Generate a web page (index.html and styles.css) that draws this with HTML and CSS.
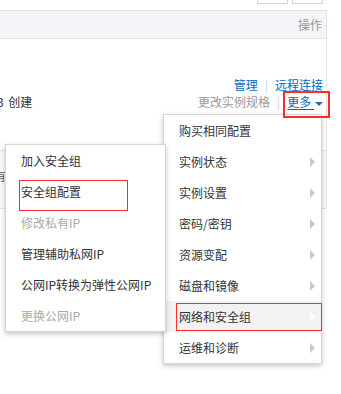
FILE: index.html
```html
<!DOCTYPE html>
<html lang="zh-CN">
<head>
    <meta charset="UTF-8">
    <title>实例列表 - 更多操作</title>
    <link rel="stylesheet" href="styles.css">
</head>
<body>
<div class="page">
    <!-- 顶部按钮 -->
    <div class="toolbar">
        <span class="tbtn"></span>
        <span class="tbtn"></span>
    </div>

    <!-- 实例表格 -->
    <div class="table">
        <div class="thead">操作</div>
        <div class="row row-main">
            <div class="created">3 创建</div>
            <div class="ops">
                <div class="ops-line">
                    <a class="link">管理</a><span class="sep">|</span><a class="link">远程连接</a>
                </div>
                <div class="ops-line">
                    <span class="muted">更改实例规格</span><span class="sep">|</span><a class="link more">更多 <i class="caret"></i></a>
                </div>
            </div>
        </div>
        <div class="row row-next">
            <span class="cut">有</span>
        </div>
    </div>

    <!-- 更多 下拉菜单 -->
    <ul class="menu menu-main">
        <li>购买相同配置</li>
        <li>实例状态<i class="arrow"></i></li>
        <li>实例设置<i class="arrow"></i></li>
        <li>密码/密钥<i class="arrow"></i></li>
        <li>资源变配<i class="arrow"></i></li>
        <li>磁盘和镜像<i class="arrow"></i></li>
        <li class="hover">网络和安全组<i class="arrow"></i></li>
        <li>运维和诊断<i class="arrow"></i></li>
    </ul>

    <!-- 网络和安全组 子菜单 -->
    <ul class="menu menu-sub">
        <li>加入安全组</li>
        <li>安全组配置</li>
        <li class="disabled">修改私有IP</li>
        <li>管理辅助私网IP</li>
        <li>公网IP转换为弹性公网IP</li>
        <li class="disabled">更换公网IP</li>
    </ul>

    <!-- 红框标注 -->
    <div class="mark mark-more"></div>
    <div class="mark mark-net"></div>
    <div class="mark mark-sg"></div>
</div>
</body>
</html>
```

FILE: styles.css
```css
* {
    box-sizing: border-box;
    margin: 0;
    padding: 0;
}
body {
    font-family: "Noto Sans CJK SC", "Noto Sans", sans-serif;
    font-size: 12px;
    color: #333;
    background-color: #ffffff;
    overflow: hidden;
}
.page {
    position: relative;
    width: 341px;
    height: 394px;
    overflow: hidden;
}

/* Toolbar */
.toolbar {
    display: flex;
    justify-content: flex-end;
    gap: 4px;
    height: 10px;
    padding-right: 18px;
}
.tbtn {
    width: 31px;
    height: 4px;
    border: 1px solid #d5d5d5;
    border-top: none;
    background-color: #ffffff;
}

/* Table */
.table {
    width: 327px;
    border-right: 1px solid #e1e6eb;
}
.thead {
    height: 29px;
    line-height: 27px;
    padding-right: 4px;
    text-align: right;
    color: #999;
    background-color: #f4f5f9;
    border-top: 1px solid #dfe4ea;
    border-bottom: 1px solid #e1e6eb;
}
.row {
    display: flex;
    border-bottom: 1px solid #e1e6eb;
}
.row-main {
    height: 112px;
    justify-content: space-between;
    align-items: flex-end;
    padding: 0 3px 40px 0;
}
.created {
    line-height: 17px;
    margin-left: -3px;
    word-spacing: 2px;
}
.ops {
    text-align: right;
}
.ops-line {
    line-height: 17px;
    white-space: nowrap;
}
.link {
    color: #0068c8;
    text-decoration: none;
    cursor: pointer;
}
.muted {
    color: #999;
}
.sep {
    color: #d0d0d0;
    margin: 0 7px 0 7px;
}
.more {
    text-decoration: underline;
    text-underline-offset: 2px;
}
.caret {
    display: inline-block;
    vertical-align: middle;
    width: 0;
    height: 0;
    margin-left: 1px;
    border-top: 4px solid #2d66ad;
    border-left: 4px solid transparent;
    border-right: 4px solid transparent;
}
.row-next {
    height: 58px;
    padding-top: 16px;
    background-color: #fafafa;
}
.row-next .cut {
    line-height: 18px;
    margin-left: -6px;
    color: #555;
}

/* Dropdown menus */
.menu {
    position: absolute;
    list-style: none;
    background-color: #ffffff;
    border: 1px solid #d6d6d6;
    box-shadow: 0 2px 5px rgba(0, 0, 0, 0.22);
}
.menu li {
    display: flex;
    align-items: center;
    height: 31px;
    padding: 0 6px 0 15px;
    white-space: nowrap;
    color: #333;
}
.menu-main {
    left: 163px;
    top: 114px;
    width: 159px;
    z-index: 1;
}
.menu-main li.hover {
    background-color: #f2f2f2;
}
.arrow {
    margin-left: auto;
    width: 0;
    height: 0;
    border-left: 5px solid #c8c8c8;
    border-top: 5px solid transparent;
    border-bottom: 5px solid transparent;
}
.hover .arrow {
    border-left-color: #ffffff;
}
.menu-sub {
    left: 5px;
    top: 144px;
    width: 161px;
    z-index: 2;
}
.menu-sub li.disabled {
    color: #aaa;
}

/* Red annotation boxes */
.mark {
    position: absolute;
    border: 1px solid #ff2a2a;
    z-index: 3;
}
.mark-more {
    left: 283px;
    top: 91px;
    width: 47px;
    height: 27px;
    border-width: 2px;
}
.mark-net {
    left: 176px;
    top: 303px;
    width: 146px;
    height: 28px;
}
.mark-sg {
    left: 19px;
    top: 180px;
    width: 109px;
    height: 31px;
}
```
